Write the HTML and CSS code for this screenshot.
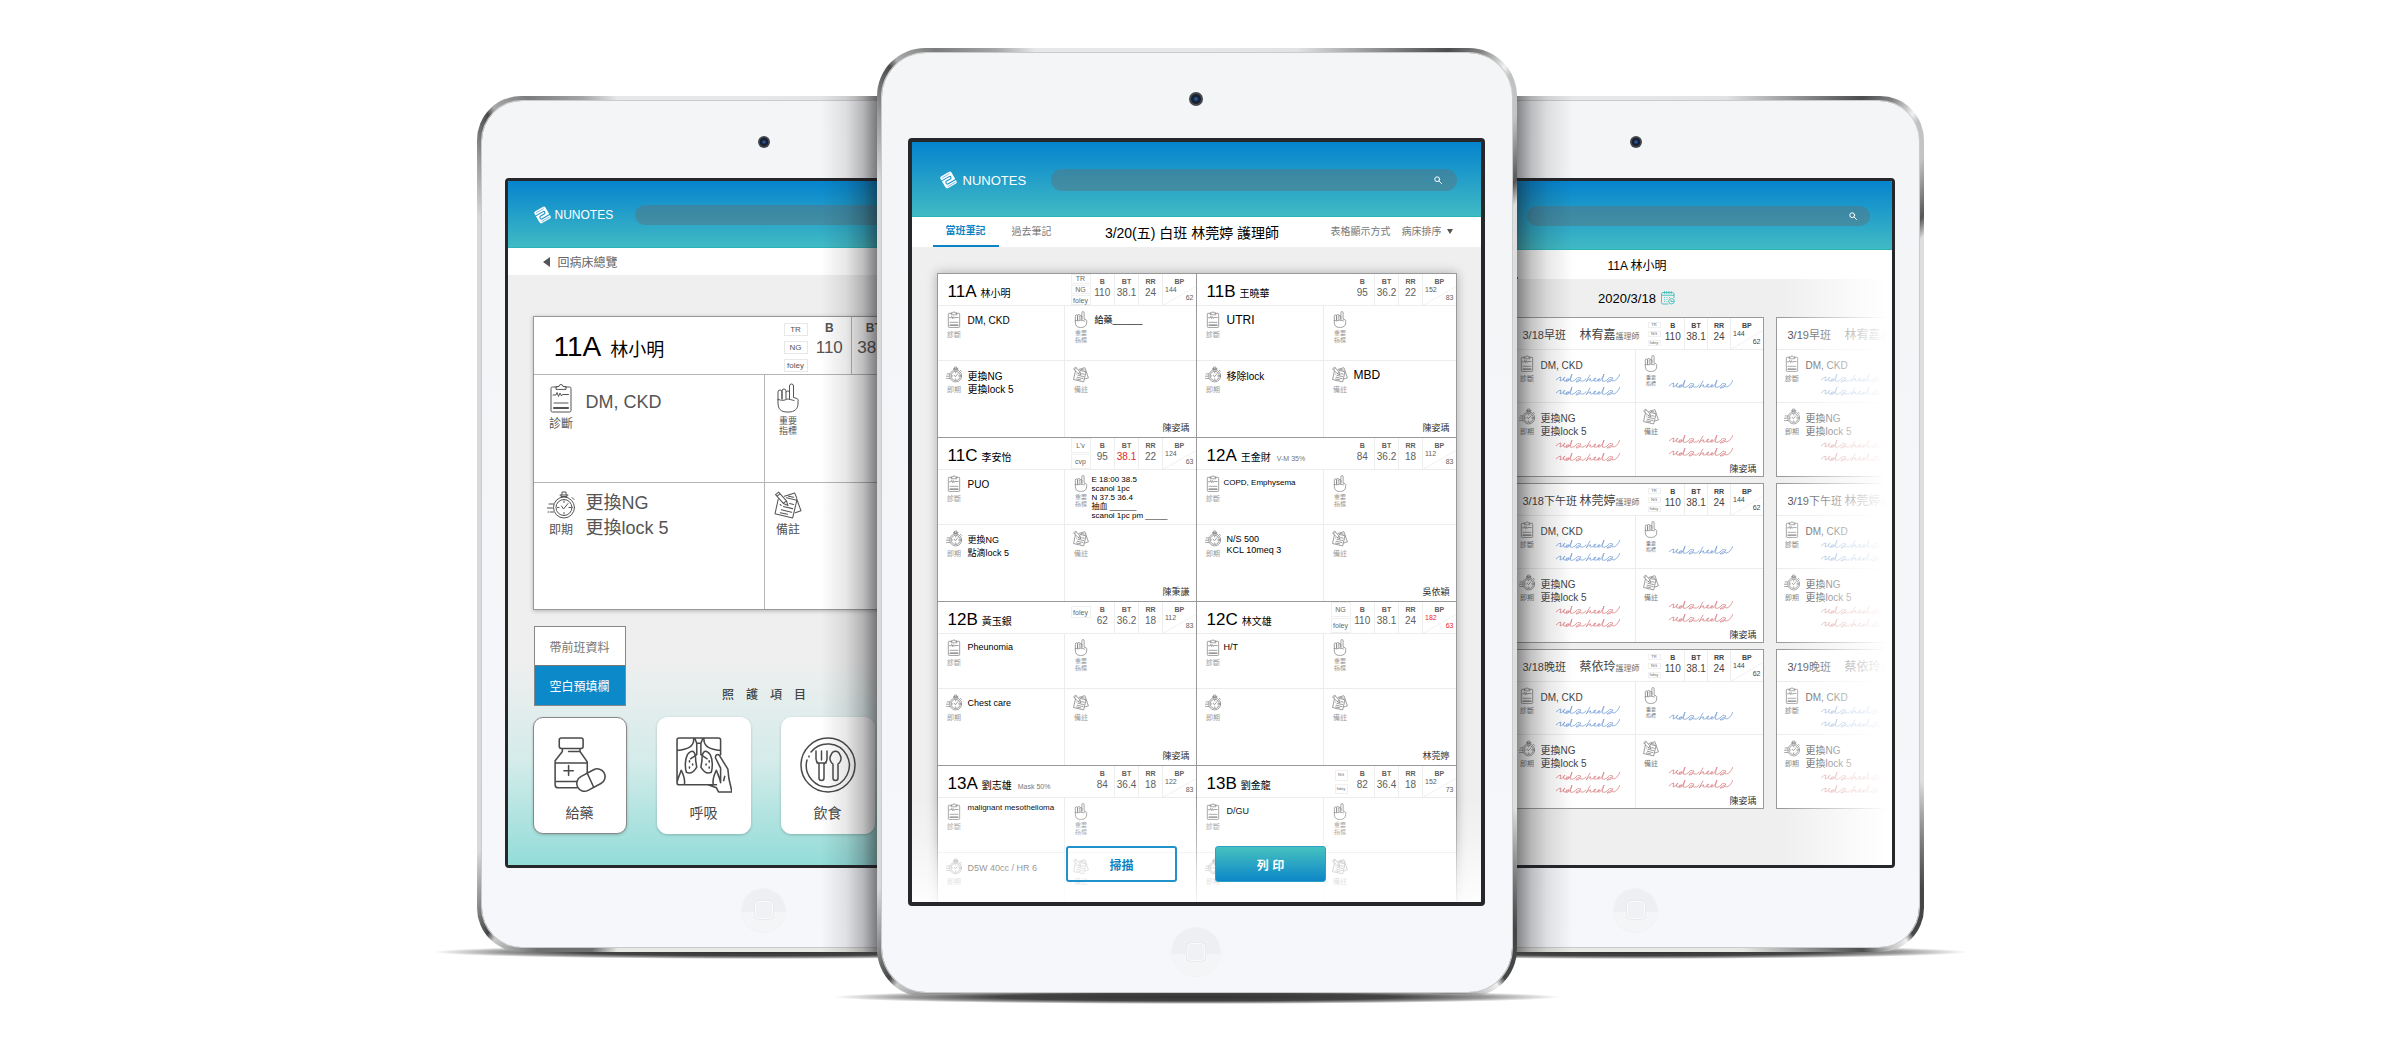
FILE: index.html
```html
<!DOCTYPE html>
<html lang="zh-Hant">
<head>
<meta charset="utf-8">
<title>NUNOTES</title>
<link rel="stylesheet" href="styles.css">
</head>
<body>
<svg class="sprite" aria-hidden="true">
  <symbol id="logo" viewBox="0 0 32 34">
    <g transform="rotate(-30 16 17)">
      <rect x="4" y="4" width="24" height="26" rx="4" fill="#fff" stroke="none"/>
      <path d="M4 12H20a2.500 2.500 0 0 1 0 5H12a2.500 2.500 0 0 0 0 6H28" fill="none" stroke="#1d93cb" stroke-width="2"/>
      <path d="M9 27H25M8 7.500H23" fill="none" stroke="#1d93cb" stroke-width="1"/>
    </g>
  </symbol>
  <symbol id="search" viewBox="0 0 8 8"><circle cx="3.200" cy="3.200" r="2.400"/><path d="M5 5L7.500 7.500"/></symbol>
  <symbol id="clip" viewBox="0 0 22 30">
    <path d="M7 4H2.500A1.500 1.500 0 0 0 1 5.500V27.500A1.500 1.500 0 0 0 2.500 29H19.500A1.500 1.500 0 0 0 21 27.500V5.500A1.500 1.500 0 0 0 19.500 4H15M6 6V3.500H9A2 2 0 0 1 13 3.500H16V6ZM3 12H6L7 9.500L8.500 13.500L10 10L11.500 13L12.500 11.500H18.500M4 20H18"/><path d="M4 25H18" stroke-width="2.200"/>
  </symbol>
  <symbol id="hand" viewBox="0 0 22 30">
    <path d="M1 17V9A2 2 0 0 1 5 9V16M5 16V8A2 2 0 0 1 9 8V16M9 9A2 2 0 0 1 12.500 9V16M12.500 13V3A2 2 0 0 1 16.500 3V14.500L20 15.500C21 16 21.500 17 21 18V21C21 26 17 29 12 29H10C4 29 1 26 1 20V16C4 18 8 17.500 10 16C12 16 15 17 17 17.500"/>
  </symbol>
  <symbol id="watch" viewBox="0 0 28 28">
    <circle cx="17" cy="16.500" r="10.500"/><circle cx="17" cy="16.500" r="8"/>
    <path d="M14 4V5.500H20V4M15 3.500V1H19V3.500M13 4H21M25 6.500L27 8.500M14.500 15L16.500 18L21 12.500M17 10V11.500M17 21.500V23M10.500 16.500H12M22 16.500H23.500M2 13H6.500M0 17H5.500M1 21H2M3.500 21H6.500"/>
  </symbol>
  <symbol id="memo" viewBox="0 0 27 27">
    <path d="M4 8L1 22L18 26L22 9L12 6.500M10 5L20 2L22 7M22 8L26 19L20.500 21M1.500 3.500L4.500 1L12 9.500L13.500 14L9 12ZM3 5L5.500 3M9 12L12 9.500M9 15L18 17M7 18L17 20.500M15 12L19 13M6 13L7 14M6 21L13 22.500M14 5L19 6"/>
  </symbol>
  <symbol id="pills" viewBox="0 0 50 54">
    <path d="M7 1H26A2 2 0 0 1 28 3V9A2 2 0 0 1 26 11H7A2 2 0 0 1 5 9V3A2 2 0 0 1 7 1ZM8 11V14L1 23V46A3 3 0 0 0 4 49H22M25 11V14L32 24V35M14 14H25M1 25H32M1 43H22M14 27.500V37M9.500 32.500H18.500"/>
    <rect x="21" y="34" width="29" height="15" rx="7.500" transform="rotate(-28 35.500 41.500)"/><path d="M32 35L38 48"/>
  </symbol>
  <symbol id="xray" viewBox="0 0 54 54">
    <path d="M39 46H3A2 2 0 0 1 1 44V3A2 2 0 0 1 3 1H41A2 2 0 0 1 43 3V17M17 1C18 10 10 12 1 13M27 1C26 10 34 12 43 13M18 1L20 6H24L26 1M20 6V17L14 21M24 6V17L30 21M19 23C19 12 15 12 11 17C8 23 9 31 10 34C14 36 17 34 20 29ZM25 23C25 12 29 12 33 17C36 23 35 31 34 34C30 36 27 34 24 29ZM1 44C2 38 4 36 5 32C8 38 9 42 8 46M43 44C42 38 40 36 39 32C36 38 35 42 36 46M43 30L38 20C38 17 40 16 42 18L50 31L51 40L54 53H41L39 49L31 46M43 30V44M46 42L47 38"/>
    <path d="M13 23v1M13 29v1M16 26v1M29 26v1M32 23v1M32 29v1"/>
  </symbol>
  <symbol id="plate" viewBox="0 0 56 56">
    <circle cx="28" cy="28" r="27"/><path d="M11 15A21.500 21.500 0 1 1 7 23"/><path d="M9 19V20M16 14V22C16 25 18 26 19 27V41A2 2 0 0 0 24 41V27C25 26 27 25 27 22V14M21.500 14V23M17 26H26M33 27V41A2 2 0 0 0 38 41V27C41 25 42 21 40 18C38 13 33 13 31 18C29 21 30 25 33 27Z"/>
  </symbol>
  <symbol id="cal" viewBox="0 0 28 28">
    <path d="M14 26H4A3 3 0 0 1 1 23V6A3 3 0 0 1 4 3H23A3 3 0 0 1 26 6V14M1 8.500H26M7 1V5M11.500 1V5M16 1V5M20.500 1V5M7 13V13.100M12 13V13.100M17 13V13.100M7 17V17.100M12 17V17.100M7 21V21.100M12 21V21.100"/><circle cx="21" cy="20.500" r="5.500"/><path d="M20 18.500V21H23"/>
  </symbol>
  <symbol id="ink" viewBox="0 0 64 10">
    <path d="M0 6Q3 3 5 3L4 7Q8 6 9 3Q6 4 8 7Q10 8 13 5Q10 4 10 7Q13 9 16 0L14 7Q17 8 19 6Q21 2 25 4Q23 9 20 8Q21 4 25 7Q28 8 30 5M34 1L30 8Q33 4 35 5Q32 7 36 7Q39 6 40 4Q37 4 38 7Q41 8 44 5Q41 4 42 7Q45 8 48 0L46 7Q49 8 51 6Q53 2 57 4Q55 9 51 8Q54 4 57 7Q61 7 64 0"/>
  </symbol>
</svg>

<main class="stage">

  <!-- Patient detail -->
  <section class="tablet side left">
    <div class="face">
      <div class="bezel"><span class="camera"></span></div>
      <div class="screen detail">
        <header class="appbar">
          <svg class="logo"><use href="#logo"/></svg><span class="brand">NUNOTES</span>
          <label class="search"><input type="search" aria-label="搜尋"></label>
        </header>
        <nav class="backbar"><a href="#"><i class="tri"></i>回病床總覽</a></nav>
        <div class="detail-body">
          <article class="bigcard">
            <div class="big-head">
              <h2><b>11A</b> 林小明</h2>
              <div class="tags"><span>TR</span><span>NG</span><span>foley</span></div>
              <table class="bigvitals">
                <tr><th>B</th><th>BT</th></tr>
                <tr><td>110</td><td>38.1</td></tr>
              </table>
            </div>
            <div class="quads">
              <div class="q"><div class="k"><svg class="ic tall"><use href="#clip"/></svg>診斷</div><p>DM, CKD</p></div>
              <div class="q"><div class="k small"><svg class="ic tall"><use href="#hand"/></svg>重要<br>指標</div></div>
              <div class="q"><div class="k"><svg class="ic"><use href="#watch"/></svg>即期</div><p>更換NG<br>更換lock 5</p></div>
              <div class="q"><div class="k"><svg class="ic"><use href="#memo"/></svg>備註</div></div>
            </div>
          </article>
          <div class="fill-row">
            <div class="fill"><button type="button">帶前班資料</button><button type="button" class="on">空白預填欄</button></div>
            <h3>照　護　項　目</h3>
          </div>
          <div class="care">
            <button type="button" class="on"><svg><use href="#pills"/></svg>給藥</button>
            <button type="button"><svg><use href="#xray"/></svg>呼吸</button>
            <button type="button"><svg><use href="#plate"/></svg>飲食</button>
          </div>
        </div>
      </div>
      <div class="bezel foot"><span class="home"></span></div>
    </div>
  </section>

  <!-- Ward overview -->
  <section class="tablet center">
    <div class="face">
      <div class="bezel"><span class="camera"></span></div>
      <div class="screen ward">
        <header class="appbar">
          <svg class="logo"><use href="#logo"/></svg><span class="brand">NUNOTES</span>
          <label class="search"><input type="search" aria-label="搜尋"><svg><use href="#search"/></svg></label>
        </header>
        <nav class="tabs">
          <a href="#" class="on">當班筆記</a><a href="#">過去筆記</a>
          <h1>3/20(五) 白班 林莞婷 護理師</h1>
          <a href="#" class="opt">表格顯示方式</a><a href="#" class="opt">病床排序<i class="tri down"></i></a>
        </nav>
        <div class="ward-body">
          <div class="grid">

            <article class="bed">
              <div class="head"><h2><b>11A</b>林小明</h2>
                <div class="tags"><span>TR</span><span>NG</span><span>foley</span></div>
                <table class="vitals"><tr><th>B</th><th>BT</th><th>RR</th><th>BP</th></tr><tr><td>110</td><td>38.1</td><td>24</td><td class="bp"><i>144</i><i>62</i></td></tr></table></div>
              <div class="quads">
                <div class="q"><div class="k"><svg class="ic"><use href="#clip"/></svg>診斷</div><p>DM, CKD</p></div>
                <div class="q"><div class="k small"><svg class="ic"><use href="#hand"/></svg>重要<br>指標</div><p class="s9">給藥______</p></div>
                <div class="q"><div class="k"><svg class="ic"><use href="#watch"/></svg>即期</div><p>更換NG<br>更換lock 5</p></div>
                <div class="q"><div class="k"><svg class="ic"><use href="#memo"/></svg>備註</div><span class="sign">陳姿瑀</span></div>
              </div>
            </article>

            <article class="bed">
              <div class="head"><h2><b>11B</b>王曉華</h2>
                <table class="vitals"><tr><th>B</th><th>BT</th><th>RR</th><th>BP</th></tr><tr><td>95</td><td>36.2</td><td>22</td><td class="bp"><i>152</i><i>83</i></td></tr></table></div>
              <div class="quads">
                <div class="q"><div class="k"><svg class="ic"><use href="#clip"/></svg>診斷</div><p class="s12">UTRI</p></div>
                <div class="q"><div class="k small"><svg class="ic"><use href="#hand"/></svg>重要<br>指標</div></div>
                <div class="q"><div class="k"><svg class="ic"><use href="#watch"/></svg>即期</div><p>移除lock</p></div>
                <div class="q"><div class="k"><svg class="ic"><use href="#memo"/></svg>備註</div><p class="s12">MBD</p><span class="sign">陳姿瑀</span></div>
              </div>
            </article>

            <article class="bed">
              <div class="head"><h2><b>11C</b>李安怡</h2>
                <div class="tags"><span>L'v</span><span>cvp</span></div>
                <table class="vitals"><tr><th>B</th><th>BT</th><th>RR</th><th>BP</th></tr><tr><td>95</td><td class="red">38.1</td><td>22</td><td class="bp"><i>124</i><i>63</i></td></tr></table></div>
              <div class="quads">
                <div class="q"><div class="k"><svg class="ic"><use href="#clip"/></svg>診斷</div><p>PUO</p></div>
                <div class="q dense"><div class="k small"><svg class="ic"><use href="#hand"/></svg>重要<br>指標</div><p class="s8">E 18:00 38.5<br>scanol 1pc<br>N 37.5 36.4<br>抽血 ______<br>scanol 1pc pm _____</p></div>
                <div class="q"><div class="k"><svg class="ic"><use href="#watch"/></svg>即期</div><p class="s9">更換NG<br>點滴lock 5</p></div>
                <div class="q"><div class="k"><svg class="ic"><use href="#memo"/></svg>備註</div><span class="sign">陳秉謙</span></div>
              </div>
            </article>

            <article class="bed">
              <div class="head"><h2><b>12A</b>王金財<small>V-M 35%</small></h2>
                <table class="vitals"><tr><th>B</th><th>BT</th><th>RR</th><th>BP</th></tr><tr><td>84</td><td>36.2</td><td>18</td><td class="bp"><i>112</i><i>83</i></td></tr></table></div>
              <div class="quads">
                <div class="q dense"><div class="k"><svg class="ic"><use href="#clip"/></svg>診斷</div><p class="s8 roomy">COPD, Emphysema</p></div>
                <div class="q"><div class="k small"><svg class="ic"><use href="#hand"/></svg>重要<br>指標</div></div>
                <div class="q"><div class="k"><svg class="ic"><use href="#watch"/></svg>即期</div><p class="s9 tight">N/S 500<br>KCL 10meq 3</p></div>
                <div class="q"><div class="k"><svg class="ic"><use href="#memo"/></svg>備註</div><span class="sign">吳依穎</span></div>
              </div>
            </article>

            <article class="bed">
              <div class="head"><h2><b>12B</b>黃玉銀</h2>
                <div class="tags"><span>foley</span></div>
                <table class="vitals"><tr><th>B</th><th>BT</th><th>RR</th><th>BP</th></tr><tr><td>62</td><td>36.2</td><td>18</td><td class="bp"><i>112</i><i>83</i></td></tr></table></div>
              <div class="quads">
                <div class="q"><div class="k"><svg class="ic"><use href="#clip"/></svg>診斷</div><p class="s9 tight">Pheunomia</p></div>
                <div class="q"><div class="k small"><svg class="ic"><use href="#hand"/></svg>重要<br>指標</div></div>
                <div class="q"><div class="k"><svg class="ic"><use href="#watch"/></svg>即期</div><p class="s9 tight">Chest care</p></div>
                <div class="q"><div class="k"><svg class="ic"><use href="#memo"/></svg>備註</div><span class="sign">陳姿瑀</span></div>
              </div>
            </article>

            <article class="bed">
              <div class="head"><h2><b>12C</b>林文雄</h2>
                <div class="tags"><span>NG</span><span>foley</span></div>
                <table class="vitals"><tr><th>B</th><th>BT</th><th>RR</th><th>BP</th></tr><tr><td>110</td><td>38.1</td><td>24</td><td class="bp red"><i>182</i><i>63</i></td></tr></table></div>
              <div class="quads">
                <div class="q dense"><div class="k"><svg class="ic"><use href="#clip"/></svg>診斷</div><p class="s9 tight">H/T</p></div>
                <div class="q"><div class="k small"><svg class="ic"><use href="#hand"/></svg>重要<br>指標</div></div>
                <div class="q"><div class="k"><svg class="ic"><use href="#watch"/></svg>即期</div></div>
                <div class="q"><div class="k"><svg class="ic"><use href="#memo"/></svg>備註</div><span class="sign">林莞婷</span></div>
              </div>
            </article>

            <article class="bed">
              <div class="head"><h2><b>13A</b>劉志雄<small>Mask 50%</small></h2>
                <table class="vitals"><tr><th>B</th><th>BT</th><th>RR</th><th>BP</th></tr><tr><td>84</td><td>36.4</td><td>18</td><td class="bp"><i>122</i><i>83</i></td></tr></table></div>
              <div class="quads">
                <div class="q"><div class="k"><svg class="ic"><use href="#clip"/></svg>診斷</div><p class="s8">malignant mesothelioma</p></div>
                <div class="q"><div class="k small"><svg class="ic"><use href="#hand"/></svg>重要<br>指標</div></div>
                <div class="q"><div class="k"><svg class="ic"><use href="#watch"/></svg>即期</div><p class="s9">D5W 40cc / HR 6</p></div>
                <div class="q"><div class="k"><svg class="ic"><use href="#memo"/></svg>備註</div></div>
              </div>
            </article>

            <article class="bed">
              <div class="head"><h2><b>13B</b>劉金龍</h2>
                <div class="tags mini"><span>NG</span><span>foley</span></div>
                <table class="vitals"><tr><th>B</th><th>BT</th><th>RR</th><th>BP</th></tr><tr><td>82</td><td>36.4</td><td>18</td><td class="bp"><i>152</i><i>73</i></td></tr></table></div>
              <div class="quads">
                <div class="q"><div class="k"><svg class="ic"><use href="#clip"/></svg>診斷</div><p class="s9 tight">D/GU</p></div>
                <div class="q"><div class="k small"><svg class="ic"><use href="#hand"/></svg>重要<br>指標</div></div>
                <div class="q"><div class="k"><svg class="ic"><use href="#watch"/></svg>即期</div></div>
                <div class="q"><div class="k"><svg class="ic"><use href="#memo"/></svg>備註</div></div>
              </div>
            </article>

          </div>
        </div>
        <div class="actions"><button type="button" class="scan">掃描</button><button type="button" class="print">列 印</button></div>
      </div>
      <div class="bezel foot"><span class="home"></span></div>
    </div>
  </section>

  <!-- Shift history -->
  <section class="tablet side right">
    <div class="face">
      <div class="bezel"><span class="camera"></span></div>
      <div class="screen history">
        <header class="appbar">
          <label class="search"><input type="search" aria-label="搜尋"><svg><use href="#search"/></svg></label>
        </header>
        <div class="titlebar"><h2>11A 林小明</h2></div>
        <div class="date">2020/3/18<svg><use href="#cal"/></svg></div>
        <div class="shifts">

          <article class="bed shift">
            <div class="head"><h2><span>3/18早班</span><em>林宥嘉</em><small>護理師</small></h2>
              <div class="tags mini"><span>TR</span><span>NG</span><span>foley</span></div>
              <table class="vitals"><tr><th>B</th><th>BT</th><th>RR</th><th>BP</th></tr><tr><td>110</td><td>38.1</td><td>24</td><td class="bp"><i>144</i><i>62</i></td></tr></table></div>
            <div class="quads">
              <div class="q"><div class="k"><svg class="ic"><use href="#clip"/></svg>診斷</div><p>DM, CKD<svg class="ink"><use href="#ink"/></svg><svg class="ink"><use href="#ink"/></svg></p></div>
              <div class="q"><div class="k small"><svg class="ic"><use href="#hand"/></svg>重要<br>指標</div><p class="low"><svg class="ink"><use href="#ink"/></svg></p></div>
              <div class="q rd"><div class="k"><svg class="ic"><use href="#watch"/></svg>即期</div><p>更換NG<br>更換lock 5<svg class="ink"><use href="#ink"/></svg><svg class="ink"><use href="#ink"/></svg></p></div>
              <div class="q rd"><div class="k"><svg class="ic"><use href="#memo"/></svg>備註</div><p class="low"><svg class="ink"><use href="#ink"/></svg><svg class="ink"><use href="#ink"/></svg></p><span class="sign">陳姿瑀</span></div>
            </div>
          </article>
          <article class="bed shift next">
            <div class="head"><h2><span>3/19早班</span><em>林宥嘉</em><small>護</small></h2></div>
            <div class="quads">
              <div class="q"><div class="k"><svg class="ic"><use href="#clip"/></svg>診斷</div><p>DM, CKD<svg class="ink"><use href="#ink"/></svg><svg class="ink"><use href="#ink"/></svg></p></div>
              <div class="q"></div>
              <div class="q rd"><div class="k"><svg class="ic"><use href="#watch"/></svg>即期</div><p>更換NG<br>更換lock 5<svg class="ink"><use href="#ink"/></svg><svg class="ink"><use href="#ink"/></svg></p></div>
              <div class="q"></div>
            </div>
          </article>

          <article class="bed shift">
            <div class="head"><h2><span>3/18下午班</span><em>林莞婷</em><small>護理師</small></h2>
              <div class="tags mini"><span>TR</span><span>NG</span><span>foley</span></div>
              <table class="vitals"><tr><th>B</th><th>BT</th><th>RR</th><th>BP</th></tr><tr><td>110</td><td>38.1</td><td>24</td><td class="bp"><i>144</i><i>62</i></td></tr></table></div>
            <div class="quads">
              <div class="q"><div class="k"><svg class="ic"><use href="#clip"/></svg>診斷</div><p>DM, CKD<svg class="ink"><use href="#ink"/></svg><svg class="ink"><use href="#ink"/></svg></p></div>
              <div class="q"><div class="k small"><svg class="ic"><use href="#hand"/></svg>重要<br>指標</div><p class="low"><svg class="ink"><use href="#ink"/></svg></p></div>
              <div class="q rd"><div class="k"><svg class="ic"><use href="#watch"/></svg>即期</div><p>更換NG<br>更換lock 5<svg class="ink"><use href="#ink"/></svg><svg class="ink"><use href="#ink"/></svg></p></div>
              <div class="q rd"><div class="k"><svg class="ic"><use href="#memo"/></svg>備註</div><p class="low"><svg class="ink"><use href="#ink"/></svg><svg class="ink"><use href="#ink"/></svg></p><span class="sign">陳姿瑀</span></div>
            </div>
          </article>
          <article class="bed shift next">
            <div class="head"><h2><span>3/19下午班</span><em>林莞婷</em><small>護</small></h2></div>
            <div class="quads">
              <div class="q"><div class="k"><svg class="ic"><use href="#clip"/></svg>診斷</div><p>DM, CKD<svg class="ink"><use href="#ink"/></svg><svg class="ink"><use href="#ink"/></svg></p></div>
              <div class="q"></div>
              <div class="q rd"><div class="k"><svg class="ic"><use href="#watch"/></svg>即期</div><p>更換NG<br>更換lock 5<svg class="ink"><use href="#ink"/></svg><svg class="ink"><use href="#ink"/></svg></p></div>
              <div class="q"></div>
            </div>
          </article>

          <article class="bed shift">
            <div class="head"><h2><span>3/18晚班</span><em>蔡依玲</em><small>護理師</small></h2>
              <div class="tags mini"><span>TR</span><span>NG</span><span>foley</span></div>
              <table class="vitals"><tr><th>B</th><th>BT</th><th>RR</th><th>BP</th></tr><tr><td>110</td><td>38.1</td><td>24</td><td class="bp"><i>144</i><i>62</i></td></tr></table></div>
            <div class="quads">
              <div class="q"><div class="k"><svg class="ic"><use href="#clip"/></svg>診斷</div><p>DM, CKD<svg class="ink"><use href="#ink"/></svg><svg class="ink"><use href="#ink"/></svg></p></div>
              <div class="q"><div class="k small"><svg class="ic"><use href="#hand"/></svg>重要<br>指標</div><p class="low"><svg class="ink"><use href="#ink"/></svg></p></div>
              <div class="q rd"><div class="k"><svg class="ic"><use href="#watch"/></svg>即期</div><p>更換NG<br>更換lock 5<svg class="ink"><use href="#ink"/></svg><svg class="ink"><use href="#ink"/></svg></p></div>
              <div class="q rd"><div class="k"><svg class="ic"><use href="#memo"/></svg>備註</div><p class="low"><svg class="ink"><use href="#ink"/></svg><svg class="ink"><use href="#ink"/></svg></p><span class="sign">陳姿瑀</span></div>
            </div>
          </article>
          <article class="bed shift next">
            <div class="head"><h2><span>3/19晚班</span><em>蔡依玲</em><small>護</small></h2></div>
            <div class="quads">
              <div class="q"><div class="k"><svg class="ic"><use href="#clip"/></svg>診斷</div><p>DM, CKD<svg class="ink"><use href="#ink"/></svg><svg class="ink"><use href="#ink"/></svg></p></div>
              <div class="q"></div>
              <div class="q rd"><div class="k"><svg class="ic"><use href="#watch"/></svg>即期</div><p>更換NG<br>更換lock 5<svg class="ink"><use href="#ink"/></svg><svg class="ink"><use href="#ink"/></svg></p></div>
              <div class="q"></div>
            </div>
          </article>

        </div>
      </div>
      <div class="bezel foot"><span class="home"></span></div>
    </div>
  </section>
</main>
</body>
</html>
```
FILE: styles.css
```css
* { box-sizing: border-box; }
body { margin: 0; background: #fff; font-family: "Liberation Sans", "Noto Sans CJK TC", sans-serif; color: #000; }
h1, h2, h3, p { margin: 0; font-weight: 400; }
a { color: inherit; text-decoration: none; }
i, em { font-style: normal; }
button { font-family: inherit; padding: 0; cursor: pointer; }
svg { display: block; fill: none; stroke: currentColor; stroke-linecap: round; stroke-linejoin: round; }
.sprite { position: absolute; width: 0; height: 0; }
.stage { display: flex; justify-content: center; align-items: flex-start; padding: 48px 24px 50px; }

/* Devices */
.tablet {
  position: relative; padding: 5px; border-radius: 44px; flex: 0 1 576px; min-width: 0;
  background: conic-gradient(#e6e7e7 0deg, #e2e2e2 12deg, #9a9a9a 20deg, #4c4c4c 28deg, #808080 31deg, #c8cac9 33deg, #f2f2f2 34deg, #bfc2c1 35deg, #c4c6c5 38deg, #6a6a6a 42deg, #555 43deg, #dedede 45deg, #dedede 132deg, #7c7f7e 138deg, #444746 142deg, #444746 146deg, #f0f0f0 147deg, #c4c4c4 149deg, #4e4e4e 152deg, #a8a8a8 160deg, #e8e8e4 166deg, #e8e8e4 199deg, #6d706f 202deg, #6d706f 208deg, #c9cbca 213deg, #444 214deg, #8f9190 217deg, #d9d9d9 221deg, #d9d9d9 317deg, #9a9c9b 322deg, #4a4a4a 326deg, #aaa 327deg, #7b7d7c 331deg, #a5a7a6 337deg, #e6e7e7 341deg);
}
.tablet::before {
  content: ""; position: absolute; z-index: -1; left: -44px; right: -44px; bottom: -7px; height: 14px;
  background: radial-gradient(closest-side, #333 0, #444 55%, #9a9a9a 80%, transparent 100%);
}
.face { border-radius: 40px; background: linear-gradient(#f4f5f7, #f6f7fa); box-shadow: 0 0 0 1px #c9cbcc; display: flex; flex-direction: column; }
.center { flex-basis: 640px; z-index: 2; border-radius: 48px; }
.center .face { border-radius: 44px; padding: 0 27px 0 26px; }
.side { margin-top: 48px; }
.side .face { padding: 0 24px; }
.left { margin-right: -174px; flex-basis: 574px; }
.left .face { padding: 0 23px; }
.right { margin-left: -169px; }
.side::after { content: ""; position: absolute; top: 0; bottom: 0; width: 56px; }
.left::after { right: 174px; background: linear-gradient(to left, rgba(20,20,24,.55), rgba(20,20,24,.28) 25%, rgba(20,20,24,.1) 55%, transparent); }
.right::after { left: 169px; background: linear-gradient(to right, rgba(20,20,24,.5), rgba(20,20,24,.26) 25%, rgba(20,20,24,.1) 55%, transparent); }
.bezel { height: 77px; padding-top: 5px; display: grid; place-items: center; }
.bezel.foot { height: 79px; }
.center .bezel { height: 85px; padding-top: 6px; }
.center .bezel.foot { height: 86px; }
.camera { width: 12px; height: 12px; border-radius: 50%; background: radial-gradient(#2b6cc0 0, #16223c 28%, #1d2029 45%, #444850 55%); }
.center .camera { width: 14px; height: 14px; }
.home { width: 43px; height: 43px; border-radius: 50%; background: linear-gradient(#eeeff2 54%, #f4f5f7 54%); box-shadow: 0 0 0 1px #f0f1f3; display: grid; place-items: center; }
.home::before { content: ""; width: 16px; height: 16px; border-radius: 4px; border: 1px solid #fafafb; box-shadow: 0 0 0 1px #e9eaed; background: #f0f1f4; }
.center .home { width: 48px; height: 48px; }
.screen { position: relative; height: 690px; border: 3px solid #26272a; border-radius: 4px; background: #efefef; overflow: hidden; display: flex; flex-direction: column; }
.center .screen { height: 768px; border-width: 4px; }

/* App bar */
.appbar { flex: none; height: 67px; padding: 2px 25px 0 26px; display: flex; align-items: center; background: linear-gradient(#0584ce, #41bac4); border-bottom: 1px solid #2bb3ba; color: #fff; }
.logo { width: 17px; height: 18px; margin-right: 4px; }
.brand { font-size: 12px; }
.search { position: relative; flex: 1; margin-left: 22px; }
.search input { display: block; width: 100%; height: 20px; border: 0; border-radius: 11px; background: rgba(86,119,131,.52); outline: 0; color: #fff; padding: 0 28px 0 12px; }
.search svg { position: absolute; right: 13px; top: 6px; width: 8px; height: 8px; }
.center .appbar { height: 75px; padding: 2px 24px 0 28px; }
.center .logo { margin-right: 6px; }
.center .brand { font-size: 13px; }
.center .search { margin-left: 25px; }
.center .search input { height: 22px; }
.center .search svg { right: 15px; top: 7px; }
.right .appbar { height: 69px; padding: 2px 22px 0 125px; }

/* Patient detail */
.tri { display: inline-block; border: 5px solid transparent; border-right: 7px solid #555; border-left: 0; }
.tri.down { border: 3px solid transparent; border-top: 5px solid #555; border-bottom: 0; margin-left: 5px; vertical-align: 1px; }
.backbar { flex: none; height: 27px; background: #fff; padding-left: 35px; display: flex; align-items: center; font-size: 12px; color: #666; }
.backbar .tri { margin-right: 8px; }
.detail-body { flex: 1; padding: 41px 25px 0; background: linear-gradient(#efefef 65%, #d5ecea 82%, #93dcd8); }
.bigcard { background: #fff; border: 1px solid #999; box-shadow: 0 1px 4px rgba(0,0,0,.25); color: #555; }
.big-head { display: grid; grid-template-columns: 250px 24px 1fr; height: 58px; border-bottom: 1px solid #b5b5b5; }
.big-head h2 { padding: 10px 0 0 20px; font-size: 18px; line-height: 40px; color: #000; }
.big-head b { font-size: 28px; font-weight: 400; margin-right: 4px; }
.big-head .tags { display: grid; gap: 5px; align-content: start; padding-top: 6px; }
.big-head .tags span { height: 13px; border: 1px solid #e8e8e8; font-size: 8px; line-height: 11px; text-align: center; }
.bigvitals { border-collapse: collapse; width: 88px; height: 57px; }
.bigvitals th, .bigvitals td { width: 44px; padding: 0; text-align: center; border-right: 1px solid #b5b5b5; }
.bigvitals tr > :last-child { border-right: 0; }
.bigvitals th { font-size: 12px; height: 18px; vertical-align: bottom; }
.bigvitals td { font-size: 17px; vertical-align: top; padding-top: 3px; }
.quads { display: grid; }
.q { display: flex; }
.k { flex: none; display: flex; flex-direction: column; align-items: center; text-align: center; }
.bigcard .quads { grid-template: 108px 126px / 231px 1fr; }
.bigcard .q { padding: 8px 0 0 12px; }
.bigcard .q:nth-child(odd) { border-right: 1px solid #b5b5b5; }
.bigcard .q:nth-child(-n+2) { border-bottom: 1px solid #b5b5b5; }
.bigcard .q:nth-child(even) { padding-left: 8px; }
.bigcard .k { width: 31px; font-size: 12px; line-height: 16px; margin-right: 9px; }
.bigcard .small { font-size: 9px; line-height: 10px; }
.bigcard .ic { width: 28px; height: 28px; margin-bottom: 3px; }
.bigcard .tall { height: 30px; }
.bigcard p { font-size: 18px; line-height: 25px; padding-top: 7px; }
.bigcard .q:nth-child(3) p { padding-top: 0; }
.fill-row { display: grid; grid-template-columns: 1fr auto 1fr; align-items: end; padding: 16px 0 11px 1px; }
.fill { width: 92px; display: grid; grid-template-rows: 38px 40px; border: 1px solid #888; }
.fill button { border: 0; background: #fff; color: #777; font-size: 12px; }
.fill button.on { background: #0b89c9; color: #fff; border-top: 1px solid #777; }
.fill-row h3 { font-size: 12px; line-height: 22px; color: #444; font-weight: 500; }
.care { display: flex; gap: 30px; }
.care button { width: 94px; height: 117px; border: 1px solid #fff; border-radius: 10px; background: #fff; box-shadow: 0 1px 3px rgba(0,0,0,.2); color: #4a4a4a; font-size: 14px; display: flex; flex-direction: column; align-items: center; gap: 9px; padding-top: 19px; }
.care button.on { border-color: #888; }
.care svg { width: 56px; height: 56px; stroke-width: 1.500; }

/* Ward overview */
.tabs { flex: none; height: 30px; background: #fff; padding: 0 28px 0 21px; display: flex; align-items: center; font-size: 10px; color: #777; }
.tabs > a { width: 66px; line-height: 28px; text-align: center; }
.tabs > a.on { color: #0a84c4; font-weight: 700; border-bottom: 2px solid #0a84c4; }
.tabs h1 { flex: 1; font-size: 14px; text-align: center; color: #000; }
.tabs > .opt { width: auto; margin-left: 11px; }
.ward-body { padding: 26px 24px 0 25px; }
.grid { display: grid; grid-template-columns: 1fr 1fr; border: 1px solid #999; border-bottom: 0; background: #fff; box-shadow: 0 0 10px rgba(0,0,0,.28); }
.bed { height: 164px; border-bottom: 1px solid #999; }
.grid .bed:nth-child(odd) { border-right: 1px solid #999; }
.head { position: relative; height: 32px; display: flex; border-bottom: 1px solid #ececec; }
.head h2 { flex: 1; padding: 4px 0 0 10px; font-size: 10px; line-height: 28px; white-space: nowrap; display: flex; align-items: baseline; }
.head b { font-size: 17px; font-weight: 400; margin-right: 4px; }
.head small { font-size: 7px; color: #777; margin-left: 6px; }
.tags span { border: 1px solid #f0f0f0; }
.head .tags { width: 20px; display: grid; gap: 1px; }
.head .tags span { display: grid; place-items: center; font-size: 7px; line-height: 7px; color: #666; }
.head .tags span:only-child { height: 12px; margin-top: 4px; }
.head .mini { width: 13px; margin: 4px 3px 3px 0; gap: 3px; }
.head .mini span { font-size: 4px; line-height: 4px; }
.vitals { border-collapse: collapse; table-layout: fixed; width: 105px; height: 31px; color: #606060; }
.vitals th, .vitals td { width: 24px; padding: 0; text-align: center; vertical-align: top; border-right: 1px solid #eee; }
.vitals tr > :last-child { width: 33px; border-right: 0; }
.vitals th { font-size: 7px; line-height: 9px; padding-top: 3px; height: 12px; }
.vitals td { font-size: 10px; line-height: 13px; }
.vitals .bp { font-size: 7px; line-height: 8px; background: linear-gradient(to bottom right, transparent 49%, #e6e6e6 50%, transparent 52%); }
.bp i { display: block; text-align: left; padding-left: 2px; }
.bp i + i { text-align: right; padding-right: 2px; }
.vitals .red { color: #e8262a; }
.bed .quads { grid-template: 55px 76px / 127px 1fr; }
.bed .q { position: relative; padding: 5px 0 0 9px; border-bottom: 1px solid #ececec; }
.bed .q:nth-child(odd) { border-right: 1px solid #ececec; }
.bed .q:nth-child(n+3) { border-bottom: 0; }
.bed .k { width: 15px; font-size: 7px; line-height: 9px; color: #999; margin-right: 6px; white-space: nowrap; }
.bed .small { font-size: 6px; line-height: 7px; }
.bed .ic { width: 16px; height: 17px; margin-bottom: 2px; color: #777; stroke-width: 1.200; }
.bed p { font-size: 10px; line-height: 13px; padding-top: 3px; white-space: nowrap; }
.bed .q:nth-child(3) p { padding-top: 4px; }
.bed .s12 { font-size: 12px; }
.bed .s9 { font-size: 9px; }
.bed .q .s8 { font-size: 8px; line-height: 9px; padding-top: 0; }
.bed .q .roomy { padding-top: 3px; }
.bed .dense .k { margin-right: 3px; }
.bed .tight { line-height: 11px; }
.sign { position: absolute; right: 6px; bottom: 2px; font-size: 9px; line-height: 13px; color: #333; }
.ward::after { content: ""; position: absolute; left: 0; right: 0; bottom: 0; height: 104px; background: linear-gradient(transparent, rgba(255,255,255,.25) 40%, rgba(255,255,255,.55) 65%, rgba(255,255,255,.9)); }
.actions { position: absolute; z-index: 1; left: 0; right: 0; bottom: 20px; display: flex; justify-content: center; gap: 38px; }
.actions button { width: 111px; height: 36px; border-radius: 3px; font-size: 12px; font-weight: 700; }
.scan { border: 2px solid #2191cb; background: rgba(255,255,255,.3); color: #0a84c4; }
.print { border: 1px solid #2f9fc6; background: linear-gradient(#46c2c0, #0d86c8); color: #fff; }

/* Shift history */
.titlebar { flex: none; height: 29px; background: linear-gradient(#0a84c4, #0a84c4) 22px 100% / 116px 2px no-repeat #fff; display: grid; place-items: center; }
.titlebar h2 { font-size: 12px; padding-left: 3px; }
.date { flex: none; height: 38px; display: flex; align-items: center; justify-content: center; gap: 5px; font-size: 13px; padding-left: 2px; }
.date svg { width: 14px; height: 14px; color: #3cc0ba; stroke-width: 1.800; }
.shifts { padding-left: 131px; display: grid; grid-template-columns: 253px 253px; gap: 6px 12px; }
.shift { height: 160px; background: #fff; border: 1px solid #999; color: #444; overflow: hidden; }
.shift .head { height: 32px; }
.shift .head h2 { font-size: 11px; padding-left: 11px; line-height: 27px; }
.shift .head h2 span { width: 57px; }
.shift .head em { font-size: 12px; }
.shift .head small { font-size: 8px; margin: 0; }
.shift .mini { margin-right: 1px; }
.shift .vitals { width: 101px; color: #444; }
.shift .vitals th, .shift .vitals td { width: 23px; }
.shift .vitals tr > :last-child { width: 32px; }
.shift .quads { grid-template: 53px 75px / 124px 1fr; }
.shift .q { padding-left: 8px; color: #444; }
.shift .k { margin-right: 6px; color: #777; }
.shift .small { font-size: 5px; line-height: 6px; }
.shift p { padding-top: 4px; }
.ink { width: 64px; height: 10px; margin: 2px 0 1px 15px; color: #7ba2d8; stroke-width: .8; }
.ink + .ink { margin-top: 3px; }
.rd .ink { color: #dc8588; }
.shift .q:nth-child(even) .ink { margin-left: 4px; }
.shift .q .low { padding-top: 23px; }
.shift .q:nth-child(4) .low { padding-top: 25px; }
.history::after { content: ""; position: absolute; top: 98px; bottom: 0; right: 0; width: 110px; background: linear-gradient(to right, rgba(255,255,255,0), rgba(255,255,255,.6) 55%, #fff 95%); }
```
